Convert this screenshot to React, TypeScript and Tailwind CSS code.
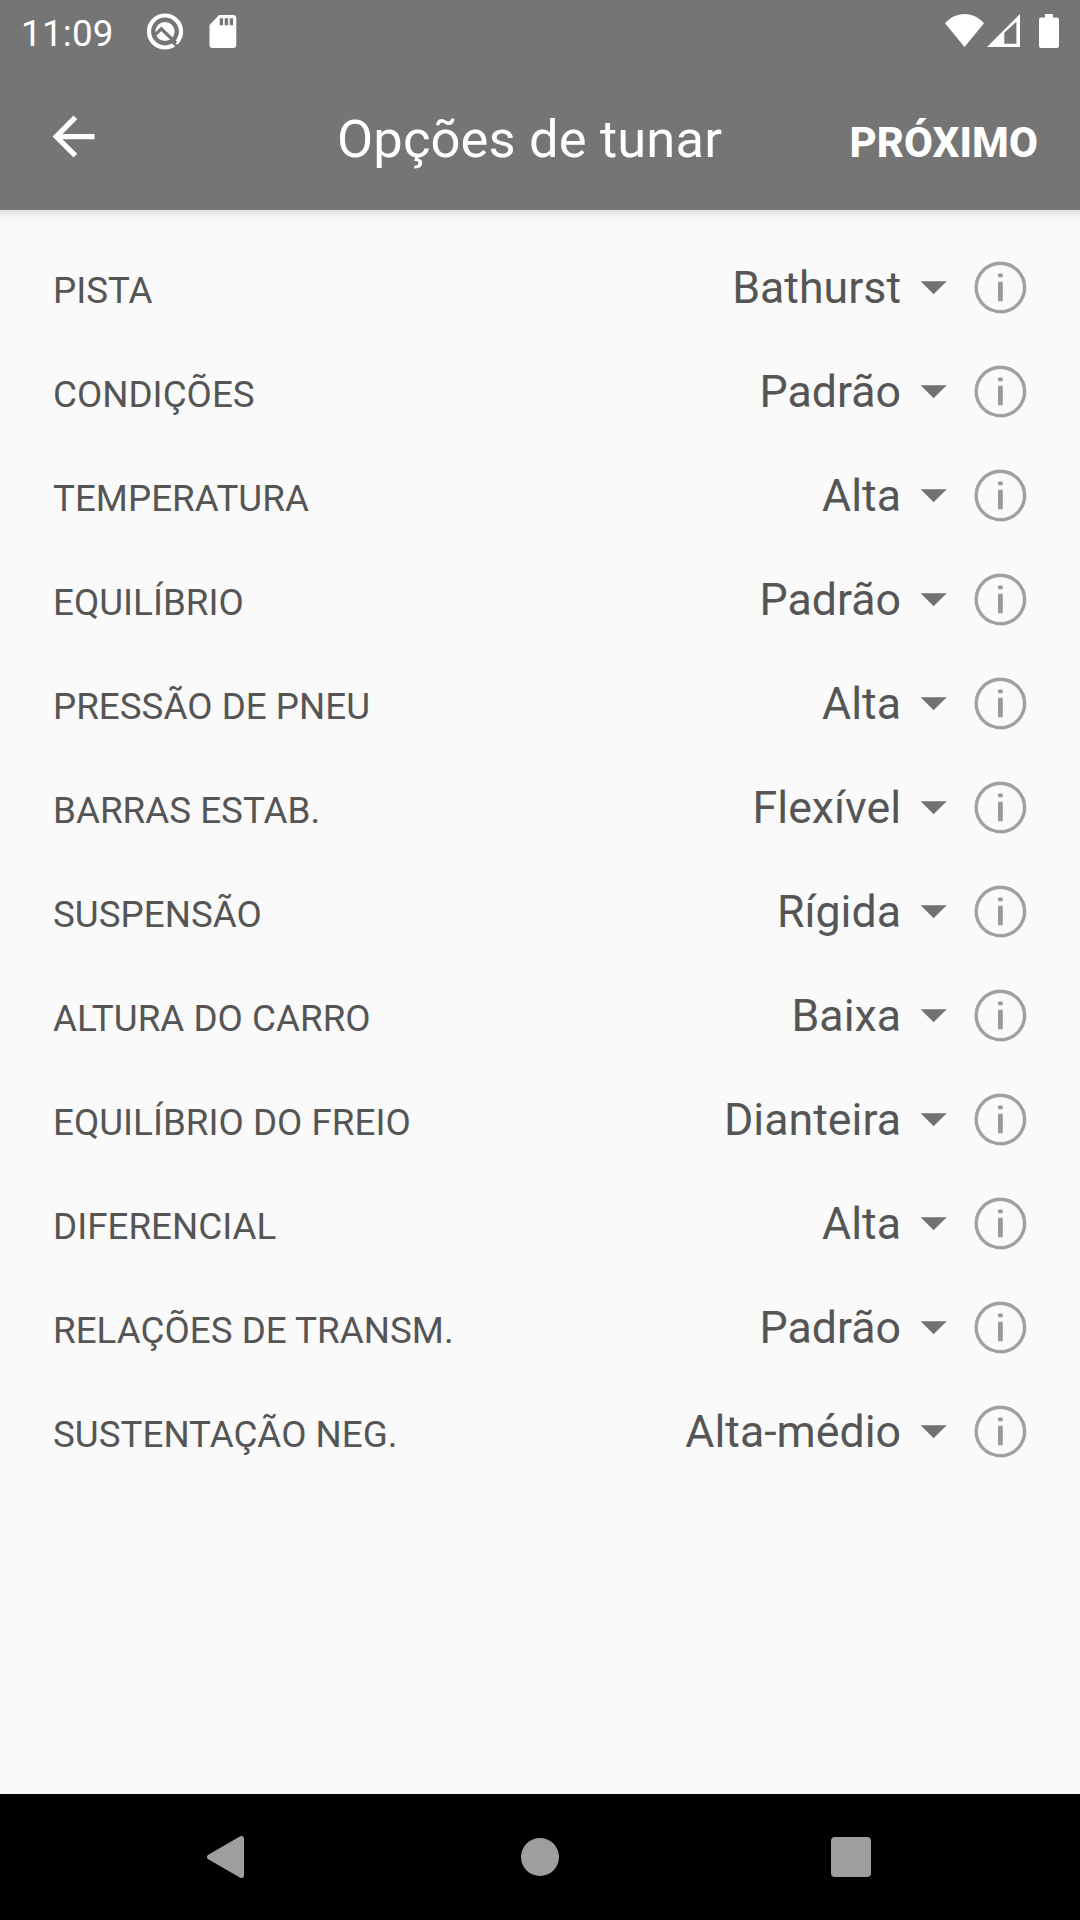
const options = [
  { label: 'PISTA', value: 'Bathurst' },
  { label: 'CONDIÇÕES', value: 'Padrão' },
  { label: 'TEMPERATURA', value: 'Alta' },
  { label: 'EQUILÍBRIO', value: 'Padrão' },
  { label: 'PRESSÃO DE PNEU', value: 'Alta' },
  { label: 'BARRAS ESTAB.', value: 'Flexível' },
  { label: 'SUSPENSÃO', value: 'Rígida' },
  { label: 'ALTURA DO CARRO', value: 'Baixa' },
  { label: 'EQUILÍBRIO DO FREIO', value: 'Dianteira' },
  { label: 'DIFERENCIAL', value: 'Alta' },
  { label: 'RELAÇÕES DE TRANSM.', value: 'Padrão' },
  { label: 'SUSTENTAÇÃO NEG.', value: 'Alta-médio' },
];

function StatusBar() {
  return (
    <div className="flex h-[63px] items-start justify-between pr-[21px] pl-[21px]">
      <div className="flex items-start">
        <span className="w-[126px] pt-[4px] text-[36.75px] leading-[60px] tracking-[0.25px]">11:09</span>
        <svg className="mt-[13px] h-[37px] w-[37px]" viewBox="0 0 37 37" fill="none">
          <circle cx="18" cy="18.5" r="16" stroke="#fff" strokeWidth="4.2" />
          <circle cx="18" cy="18.5" r="9.6" fill="#fff" />
          <path d="M8 21.8 L14.3 15.8 L29 30" stroke="#757575" strokeWidth="3.2" />
          <path d="M25.5 29 L31 34.5" stroke="#757575" strokeWidth="2.6" />
        </svg>
        <svg className="mt-[15px] ml-[25px] h-[33px] w-[28px]" viewBox="0 0 28 33">
          <path
            d="M10 0H24.5A3 3 0 0 1 27.3 3V30A3 3 0 0 1 24.3 33H3.5A3 3 0 0 1 .5 30V10Z"
            fill="#fff"
          />
          <path d="M10.7 3.3h3.4v7h-3.4zM15.7 3.3h3.4v7h-3.4zM20.7 3.3h3.4v7h-3.4z" fill="#757575" />
        </svg>
      </div>
      <div className="flex items-start pt-[14px]">
        <svg className="h-[33px] w-[39px]" viewBox="0 0 39 33">
          <path d="M0 9.3C5 3.5 12 0 19.5 0S34 3.5 39 9.3L19.5 33Z" fill="#fff" />
        </svg>
        <svg className="ml-[3px] h-[33px] w-[33px]" viewBox="0 0 33 33">
          <path fillRule="evenodd" d="M0 33L33 0V33ZM17.3 18.8V29.8H29.4V7.8Z" fill="#fff" />
        </svg>
        <svg className="ml-[19px] h-[34px] w-[20px]" viewBox="0 0 20 34">
          <path
            d="M6 0H14V3.4H18A2 2 0 0 1 20 5.4V32A2 2 0 0 1 18 34H2A2 2 0 0 1 0 32V5.4A2 2 0 0 1 2 3.4H6Z"
            fill="#fff"
          />
        </svg>
      </div>
    </div>
  );
}

function AppBar() {
  return (
    <div className="flex h-[147px] items-center pr-[42px] pl-[42px]">
      <svg className="h-[63px] w-[63px] shrink-0" viewBox="0 0 24 24" fill="#fff">
        <path d="M20 11H7.83l5.59-5.59L12 4l-8 8 8 8 1.41-1.41L7.83 13H20v-2z" />
      </svg>
      <div className="flex flex-1 items-baseline justify-between pt-[4px] pl-[232px]">
        <h1 className="text-[52.5px] leading-[62px] tracking-[0.15px] whitespace-nowrap">Opções de tunar</h1>
        <button className="text-[42px] leading-[50px] font-extrabold tracking-[0.1px]">PRÓXIMO</button>
      </div>
    </div>
  );
}

function InfoIcon() {
  return (
    <svg className="h-[54px] w-[54px] shrink-0" viewBox="0 0 54 54">
      <circle cx="27.4" cy="26.5" r="24.2" fill="none" stroke="#a0a0a0" strokeWidth="3.4" />
      <rect x="25" y="12.6" width="4.8" height="3.6" rx="1" fill="#999" />
      <rect x="25" y="20.7" width="4.8" height="19.5" rx="1" fill="#999" />
    </svg>
  );
}

function OptionRow({ label, value }: { label: string; value: string }) {
  return (
    <div className="flex h-[104px] items-center">
      <div className="flex flex-1 items-baseline justify-between pt-[3px]">
        <span className="text-[36.75px] tracking-[0.02px]">{label}</span>
        <span className="text-[44.7px] leading-[54px]">{value}</span>
      </div>
      <svg className="ml-[19px] h-[15px] w-[27px]" viewBox="0 0 27 15">
        <path d="M.6 .3H26.6L13.6 13.3Z" fill="#727272" />
      </svg>
      <button className="ml-[26px]" aria-label={label}>
        <InfoIcon />
      </button>
    </div>
  );
}

function NavigationBar() {
  return (
    <nav className="flex h-[126px] items-center justify-between bg-black pr-[209px] pl-[206px]">
      <svg className="h-[42px] w-[39px]" viewBox="0 0 39 42">
        <path
          d="M3.5 21L35.5 2.5V39.5Z"
          fill="#9e9e9e"
          stroke="#9e9e9e"
          strokeWidth="5"
          strokeLinejoin="round"
        />
      </svg>
      <div className="ml-[3px] h-[38px] w-[38px] rounded-full bg-[#9e9e9e]" />
      <div className="h-[40px] w-[40px] rounded-[4px] bg-[#9e9e9e]" />
    </nav>
  );
}

export default function App() {
  return (
    <div className="flex h-[1920px] w-[1080px] flex-col overflow-hidden bg-[#fafafa] font-['Roboto',sans-serif]">
      <header className="bg-[#757575] text-white">
        <StatusBar />
        <AppBar />
      </header>
      <div className="h-[16px] bg-linear-to-b from-[#dfdfdf] via-[#f3f3f3] via-40% to-[#fafafa]" />
      <main className="flex-1 pt-[10px] pr-[53px] pl-[53px] text-[#555]">
        {options.map((option) => (
          <OptionRow key={option.label} label={option.label} value={option.value} />
        ))}
      </main>
      <NavigationBar />
    </div>
  );
}
